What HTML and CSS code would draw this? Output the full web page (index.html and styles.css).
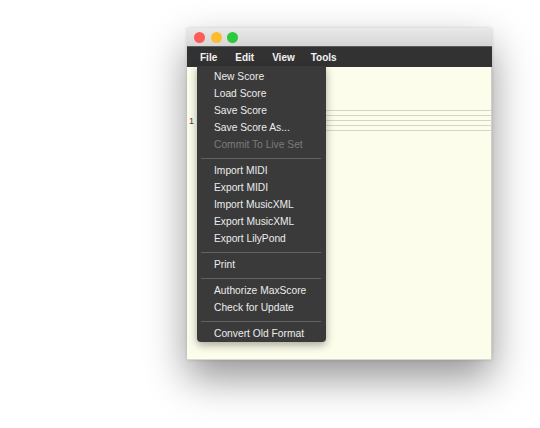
FILE: index.html
```html
<!DOCTYPE html>
<html>
<head>
<meta charset="utf-8">
<link rel="stylesheet" href="styles.css">
</head>
<body>
<div class="window">
  <div class="titlebar">
    <span class="light red"></span>
    <span class="light yellow"></span>
    <span class="light green"></span>
  </div>
  <div class="menubar">
    <span class="mb-item">File</span>
    <span class="mb-item">Edit</span>
    <span class="mb-item">View</span>
    <span class="mb-item tools">Tools</span>
  </div>
  <div class="content">
    <div class="system">
      <span class="measure-num">1</span>
      <div class="staff">
        <div class="line"></div>
        <div class="line"></div>
        <div class="line"></div>
        <div class="line"></div>
        <div class="line"></div>
      </div>
    </div>
  </div>
  <div class="dropdown">
    <div class="item">New Score</div>
    <div class="item">Load Score</div>
    <div class="item">Save Score</div>
    <div class="item">Save Score As...</div>
    <div class="item disabled">Commit To Live Set</div>
    <div class="sep"></div>
    <div class="item">Import MIDI</div>
    <div class="item">Export MIDI</div>
    <div class="item">Import MusicXML</div>
    <div class="item">Export MusicXML</div>
    <div class="item">Export LilyPond</div>
    <div class="sep"></div>
    <div class="item">Print</div>
    <div class="sep"></div>
    <div class="item">Authorize MaxScore</div>
    <div class="item">Check for Update</div>
    <div class="sep"></div>
    <div class="item">Convert Old Format</div>
  </div>
</div>
</body>
</html>
```

FILE: styles.css
```css
html, body {
  margin: 0;
  padding: 0;
  background: #ffffff;
}
body {
  padding: 28px 0 0 187px;
  min-height: 428px;
  box-sizing: border-box;
  font-family: "Liberation Sans", Arial, Helvetica, sans-serif;
}
.window {
  position: relative;
  width: 305px;
  height: 332px;
  display: flex;
  flex-direction: column;
  box-shadow: 0 18px 38px rgba(0, 0, 0, 0.42), 0 0 3px rgba(0, 0, 0, 0.15);
  background: #fdfdec;
}
.titlebar {
  height: 18px;
  flex: none;
  background: linear-gradient(#e9e9e9, #d6d6d6);
  display: flex;
  align-items: center;
  padding-left: 7px;
  gap: 5.5px;
  box-sizing: border-box;
  padding-top: 1px;
}
.light {
  width: 11px;
  height: 11px;
  border-radius: 50%;
  display: block;
}
.red { background: #fc5b57; }
.yellow { background: #fdbb2e; }
.green { background: #2bc840; }
.menubar {
  height: 21px;
  flex: none;
  box-sizing: border-box;
  background: #323232;
  border-top: 1px solid #5c5c5c;
  display: flex;
  align-items: center;
  padding-left: 13px;
  padding-top: 1px;
  gap: 18px;
  font-weight: bold;
  font-size: 10px;
  color: #f2f2f2;
}
.tools { margin-left: -2px; }
.content {
  flex: 1;
  background: #fdfdec;
  border-right: 1px solid #d0d0c4;
  border-bottom: 1px solid #d8d8cc;
}
.system {
  display: flex;
  align-items: center;
  margin-top: 43px;
}
.measure-num {
  width: 10px;
  font-size: 9px;
  color: #444;
  padding-left: 2px;
  box-sizing: border-box;
  line-height: 1;
  margin-top: 1px;
}
.staff {
  flex: 1;
}
.line {
  height: 5px;
  border-top: 1px solid #d6d6c8;
  box-sizing: border-box;
}
.line:last-child { height: 1px; }
.dropdown {
  position: absolute;
  left: 10px;
  top: 38px;
  width: 129px;
  box-sizing: border-box;
  padding: 1px 0 1px;
  background: #3a3a3a;
  border-radius: 0 0 4px 4px;
  box-shadow: 0 3px 9px rgba(0, 0, 0, 0.35);
  font-size: 10.25px;
  color: #ececec;
}
.item {
  height: 17px;
  line-height: 19px;
  overflow: hidden;
  padding-left: 17px;
  white-space: nowrap;
}
.item.disabled { color: #7a7a7a; }
.sep {
  height: 1px;
  background: #626262;
  margin: 6px 5px 2px 4px;
}
```
